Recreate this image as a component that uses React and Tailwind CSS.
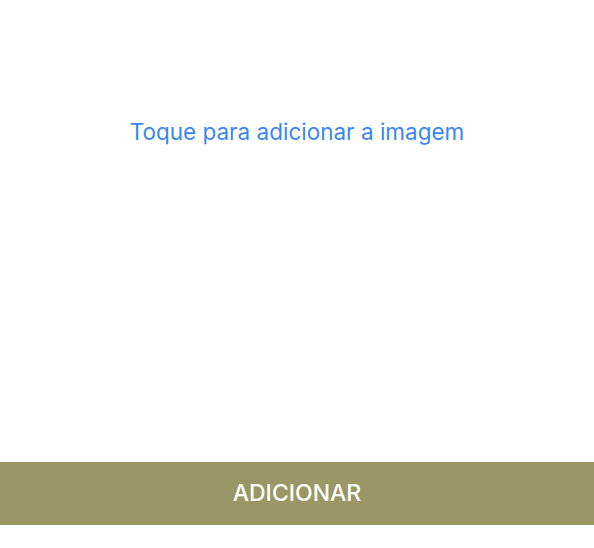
import React from "react";

export default function App() {
  return (
    <div className="w-[594px] h-[548px] bg-white flex flex-col" style={{ fontFamily: "Inter, 'Noto Sans', sans-serif" }}>
      {/* image picker */}
      <button className="h-[264px] w-full flex items-center justify-center">
        <span className="text-[22.5px] text-[#3b87ef]">Toque para adicionar a imagem</span>
      </button>

      <div className="flex-1" />

      <button className="h-[63px] w-full bg-[#9a9665] flex items-center justify-center text-white text-[23px] font-medium mb-[23px]">
        ADICIONAR
      </button>
    </div>
  );
}
